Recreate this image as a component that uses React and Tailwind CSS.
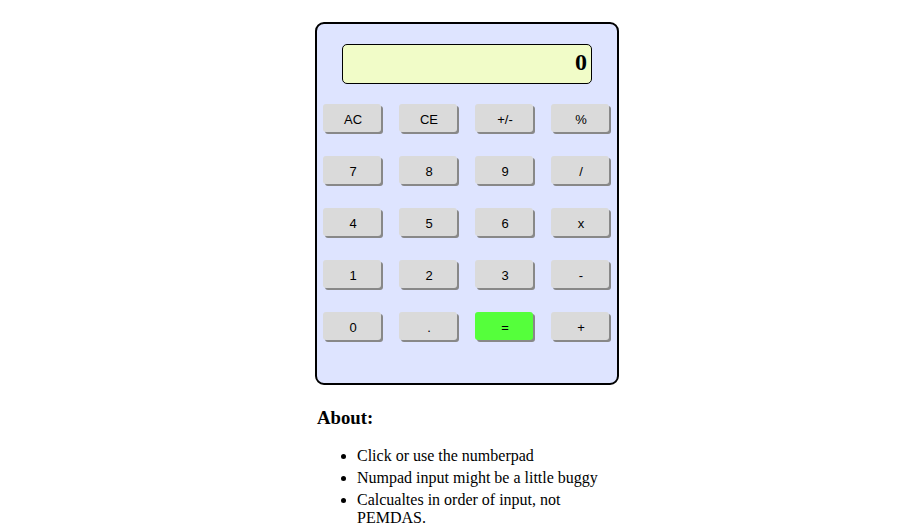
import React from "react";

const rows = [
  ["AC", "CE", "+/-", "%"],
  ["7", "8", "9", "/"],
  ["4", "5", "6", "x"],
  ["1", "2", "3", "-"],
  ["0", ".", "=", "+"],
];

export default function App() {
  return (
    <div className="min-h-[532px] bg-white pt-[22px] pl-[315px]" style={{ fontFamily: '"Liberation Serif", "Times New Roman", serif' }}>
      <div className="w-[304px] h-[363px] rounded-[9px] border-2 border-black bg-[#dee4ff]">
        <div className="mx-auto mt-[20px] w-[250px] h-[40px] rounded-[5px] border border-black bg-[#f1fcc8] flex items-center justify-end pr-[4px] pb-[4px]">
          <span className="text-[24px] font-bold leading-none text-black">0</span>
        </div>
        <div className="mt-[20px] pl-[6px] flex flex-col gap-[24px]">
          {rows.map((row, i) => (
            <div key={i} className="flex gap-[18px]">
              {row.map((k) => (
                <button
                  key={k}
                  className={
                    "w-[58px] h-[28px] rounded-[3px] pt-[3px] pl-[2px] text-[13px] text-black shadow-[2px_2px_0_#888888] flex items-center justify-center " +
                    (k === "=" ? "bg-[#55ff3b]" : "bg-[#dadada]")
                  }
                  style={{ fontFamily: '"Liberation Sans", Arial, sans-serif' }}
                >
                  {k}
                </button>
              ))}
            </div>
          ))}
        </div>
      </div>
      <div className="w-[302px] pl-[2px] text-black">
        <h3 className="mt-[22px] text-[18.72px] font-bold leading-[21.5px]">About:</h3>
        <ul className="mt-[18px] list-disc pl-[40px] text-[16px] leading-[18px]">
          <li className="mb-[4px]">Click or use the numberpad</li>
          <li className="mb-[4px]">Numpad input might be a little buggy</li>
          <li className="mb-[4px]">Calcualtes in order of input, not PEMDAS.</li>
        </ul>
      </div>
    </div>
  );
}
